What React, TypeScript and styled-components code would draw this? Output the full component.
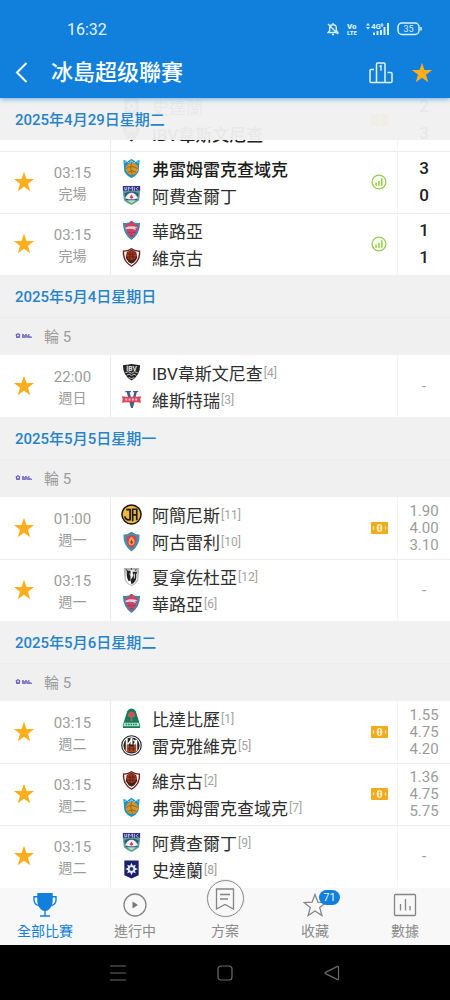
import React from "react";
import styled, { createGlobalStyle } from "styled-components";

const BLUE = "#117fdc";
const AMBER = "#fdae1c";

const GlobalStyle = createGlobalStyle`
  * { box-sizing: border-box; }
  body {
    margin: 0;
    background: #fff;
    font-family: Roboto, "Noto Sans CJK TC", sans-serif;
    color: #2b2b2b;
  }
  button {
    margin: 0;
    padding: 0;
    border: 0;
    background: none;
    font: inherit;
    color: inherit;
    cursor: pointer;
  }
  h1, h2, p, ul { margin: 0; padding: 0; }
  ul { list-style: none; }
  svg { display: block; flex: none; }
`;

const Screen = styled.div`
  display: flex;
  flex-direction: column;
  height: 100vh;
`;

const Header = styled.header`
  position: relative;
  z-index: 3;
  background: ${BLUE};
  color: #fff;
  box-shadow: 0 1px 5px rgba(17, 127, 220, 0.6);
`;

const StatusBar = styled.div`
  display: flex;
  align-items: center;
  justify-content: space-between;
  height: 48px;
  padding: 10px 28px 0 67px;
  font-size: 16px;
  color: #e2f3ff;
`;

const StatusIcons = styled.div`
  display: flex;
  align-items: center;
  gap: 8px;
`;

const AppBar = styled.div`
  display: flex;
  align-items: center;
  height: 50px;
  padding: 0 17px 0 14px;
`;

const Title = styled.h1`
  flex: 1;
  padding-left: 21px;
  font-size: 22px;
  line-height: 30px;
  font-weight: 500;
`;

const IconButton = styled.button<{ $gap?: number }>`
  display: grid;
  place-items: center;
  margin-left: ${(p) => p.$gap ?? 0}px;
`;

const Feed = styled.main`
  flex: 1;
  min-height: 0;
  overflow-y: auto;
  scrollbar-width: none;
`;

const DateHeading = styled.h2`
  position: sticky;
  top: 0;
  z-index: 2;
  display: flex;
  align-items: center;
  height: 42px;
  padding: 0 15px 2px;
  background: rgba(240, 240, 240, 0.96);
  color: #2583cb;
  font-size: 15px;
  font-weight: 500;
`;

const LeagueRow = styled.div`
  display: flex;
  align-items: center;
  gap: 12px;
  height: 38px;
  padding: 0 15px 2px;
  background: #f0f0f0;
  border-top: 1px solid #ededed;
  color: #9c9c9c;
  font-size: 15px;
`;

const MatchList = styled.ul<{ $scrolled?: boolean }>`
  margin-top: ${(p) => (p.$scrolled ? -51 : 0)}px;
`;

const Match = styled.li`
  display: grid;
  grid-template-columns: 35px 75px 1fr 36px 53px;
  height: 62px;
  background: #fff;

  & + & {
    box-shadow: inset 0 1px #ececec;
  }
`;

const FavouriteButton = styled.button`
  display: flex;
  align-items: center;
  justify-content: flex-end;
`;

const Kickoff = styled.div`
  display: flex;
  flex-direction: column;
  align-items: center;
  justify-content: center;
  padding-top: 4px;
  color: #9c9c9c;
  font-size: 15px;
  line-height: 21px;
`;

const Day = styled.span`
  font-size: 14px;
`;

const Teams = styled.div`
  display: flex;
  flex-direction: column;
  justify-content: center;
  min-width: 0;
  padding-left: 10px;
  border-left: 1px solid #ececec;
`;

const Team = styled.div<{ $winner?: boolean }>`
  display: flex;
  align-items: center;
  height: 27px;
  font-size: 17px;
  font-weight: ${(p) => (p.$winner ? 500 : 400)};
  color: ${(p) => (p.$winner ? "#1c1c1c" : "#2e2e2e")};
  white-space: nowrap;
`;

const TeamName = styled.span`
  padding-left: 10px;
`;

const Rank = styled.span`
  padding-left: 1px;
  font-size: 12px;
  font-weight: 400;
  color: #a2a2a2;
`;

const Marker = styled.div`
  display: flex;
  align-items: center;
  justify-content: center;
`;

const Result = styled.div<{ $kind: "score" | "odds" }>`
  display: flex;
  flex-direction: column;
  align-items: center;
  justify-content: center;
  border-left: 1px solid #f3f3f3;
  font-size: ${(p) => (p.$kind === "score" ? 17 : 15)}px;
  line-height: ${(p) => (p.$kind === "score" ? 27 : 17)}px;
  font-weight: ${(p) => (p.$kind === "score" ? 500 : 400)};
  color: ${(p) => (p.$kind === "score" ? "#222" : "#9c9c9c")};
`;

const TabBar = styled.nav`
  position: relative;
  z-index: 3;
  display: grid;
  grid-template-columns: repeat(5, 1fr);
  grid-template-rows: 57px;
  background: #f8f8f8;
`;

const Tab = styled.button<{ $active?: boolean }>`
  display: flex;
  flex-direction: column;
  align-items: center;
  justify-content: flex-end;
  gap: 3px;
  padding-bottom: 2px;
  font-size: 14px;
  line-height: 23px;
  color: ${(p) => (p.$active ? BLUE : "#8b8b8b")};
`;

const TabIcon = styled.span`
  position: relative;
  display: block;
`;

const RaisedIcon = styled.span`
  display: grid;
  flex: none;
  place-items: center;
  width: 37px;
  height: 37px;
  border: 1px solid #8b8b8b;
  border-radius: 50%;
  background: #f8f8f8;
  box-shadow: 0 0 0 1px #f0f0f0;
`;

const Badge = styled.span`
  position: absolute;
  left: 16px;
  top: -3px;
  width: 21px;
  height: 15px;
  border-radius: 8px;
  background: ${BLUE};
  color: #e8f5ff;
  font-size: 11px;
  line-height: 15px;
  text-align: center;
`;

const SystemBar = styled.footer`
  display: flex;
  align-items: center;
  justify-content: center;
  gap: 91px;
  height: 55px;
  background: #000;
`;

const Star = ({ size = 22 }: { size?: number }) => (
  <svg width={size} height={size} viewBox="0 0 22 22">
    <path
      d="M11 .8l2.500 7.200 7.600.1-6.100 4.700 2.200 7.400L11 15.800l-6.200 4.400L7 12.800.9 8.100l7.600-.1z"
      fill={AMBER}
    />
  </svg>
);

const BackIcon = () => (
  <svg width="16" height="24" viewBox="0 0 16 24" fill="none" stroke="#fff" strokeWidth="2">
    <path d="M12.500 2L3 11.500 12.500 21" />
  </svg>
);

const PodiumIcon = () => (
  <svg width="24" height="22" viewBox="0 0 24 22" fill="none" stroke="#e3f4ff" strokeWidth="1.500">
    <path d="M7.500 20.500V2q0-1 1-1h6.500q1 0 1 1v18.500" />
    <path d="M5 7.500H2q-1 0-1 1v11q0 1 1 1h20q1 0 1-1v-8q0-1-1-1h-3.500" />
    <path d="M10.500 4.500l1.500-.8v5" strokeWidth="1.400" />
  </svg>
);

const MutedBellIcon = () => (
  <svg width="12" height="14" viewBox="0 0 12 14" fill="none" stroke="#d8f0ff" strokeWidth="1.400">
    <path d="M6 1v1.500M1.200 10.500h9.600L9.300 8.500V6Q9.300 2.700 6 2.700T2.700 6v2.500zM5 12.500h2M1 2l10 10" />
  </svg>
);

const VolteIcon = () => (
  <svg width="10" height="14" viewBox="0 0 10 14" fill="#d8f0ff" fontFamily="Roboto, sans-serif" fontWeight="900">
    <text x="0" y="6.500" fontSize="8">Vo</text>
    <text x="0" y="13" fontSize="6">LTE</text>
  </svg>
);

const SignalIcon = () => (
  <svg width="24" height="14" viewBox="0 0 24 14" fill="#d8f0ff">
    <path d="M1 3.500L3 1l2 2.500zM1 5l2 2.500L5 5z" />
    <text x="6" y="7" fontSize="8" fontFamily="Roboto, sans-serif" fontWeight="700">4G</text>
    <path d="M16.500 1h1v1.500h1v1h-1V5h-1V3.500h-1v-1h1zM8 10.500h2V13H8zM11.500 9h2v4h-2zM15 8h2v5h-2zM18.500 5h2v8h-2zM22 1h2v12h-2z" />
  </svg>
);

const BatteryIcon = () => (
  <svg width="25" height="14" viewBox="0 0 25 14" fill="none" stroke="#d8f0ff" strokeWidth="1.500">
    <rect x="1" y="1" width="21" height="11.500" rx="4" />
    <path d="M24 5v3.500" />
    <text x="11.500" y="10.200" fontSize="9" textAnchor="middle" fontFamily="Roboto, sans-serif" fill="#d8f0ff" stroke="none">
      35
    </text>
  </svg>
);

const LeagueLogo = () => (
  <svg width="17" height="8" viewBox="0 0 17 8" fill="#6b62c4">
    <path d="M3 1l2.300 1.600L4.700 6H1.300L.6 2.600z" />
    <circle cx="3" cy="3.600" r="1" fill="#dedcf0" />
    <path d="M7 2h2v1h1V2h2v1.200h1V2h1.500v2h1V4.500H17V6H12V5.500h-1V6H7z" opacity=".8" />
  </svg>
);

const StatsMarker = () => (
  <svg width="16" height="16" viewBox="0 0 16 16">
    <circle cx="8" cy="8" r="6.900" fill="#fbfff2" stroke="#95c955" strokeWidth="1.300" />
    <path d="M4.300 8.500H6v3.200H4.300zM7.100 7h1.700v4.700H7.100zM9.900 4.300h1.700v7.400H9.900z" fill="#9bcf56" />
  </svg>
);

const CashMarker = () => (
  <svg width="17" height="12" viewBox="0 0 17 12">
    <rect width="17" height="12" rx="1" fill="#f2ab1f" />
    <ellipse cx="8.500" cy="6" rx="2.800" ry="4" fill="#fff0c2" />
    <path d="M8.500 2.800v6.400M7.300 4.600h2.200M7.300 7.300h2.200" stroke="#f2ab1f" strokeWidth=".8" />
    <path d="M2.500 4.500v3M14.500 4.500v3" stroke="#fff0c2" strokeWidth="1.200" />
  </svg>
);

type CrestName =
  | "fram" | "hafnar" | "valur" | "vikingur" | "ibv" | "vestri"
  | "akranes" | "afture" | "kaplakriki" | "breida" | "kr" | "stjarnan";

const crestArt: Record<CrestName, React.ReactNode> = {
  fram: (
    <>
      <path d="M2.500 2l4.500 1.500L11 1l4 2.500L19.500 2l-1 12q-2 5-7.500 7-5.500-2-7.500-7z" fill="#1d91c7" />
      <path d="M4 5l2-2 2 2M9 5l2-2 2 2M14 5l2-2 2 2" stroke="#d9f0f5" fill="none" />
      <circle cx="11.500" cy="11.500" r="6.500" fill="#d4952c" />
      <path d="M5.500 11q5-4 12 0M7 15q5-3 9 0M11 5.500q-2 5 1 12" stroke="#8c5a15" strokeWidth=".8" fill="none" />
    </>
  ),
  hafnar: (
    <>
      <path d="M2 1h18v6l-1 9q-4 3-8 5-5-2-8-5L2 7z" fill="#5ca488" />
      <path d="M2 1h18v5H2z" fill="#342f86" />
      <path d="M4 2v3h2V2m2 4V2l2 2 2-2v4m2-4v4m4-4l-2 2 2 2" stroke="#cfd7ef" strokeWidth=".9" fill="none" />
      <path d="M3.500 9l4-2h7l4 2-1 6-3 2h-7l-3-2z" fill="#30598a" />
      <path d="M4 14q3-6 7-6t7 6l-4 1H8z" fill="#f1eff0" />
      <path d="M9 13l2-3 2 3-2 1.500z" fill="#d83a4e" />
      <path d="M6 16h10l-5 3z" fill="#b8e0c9" />
    </>
  ),
  valur: (
    <>
      <path d="M11 1q3 3 9 2 0 12-9 18Q2 15 2 3q6 1 9-2z" fill="#3c8ab4" />
      <path d="M11 3q3 2 7 2-1 9-7 14Q5 14 4 5q4 0 7-2z" fill="#d8405b" />
      <path d="M4.500 8q6.500-3 13 0l-3 .8 1.500 2q-6-2.500-11-1z" fill="#cddbe8" />
      <path d="M7 13h3l1 1.500L12 13h3M9.500 16.500h3" stroke="#6c4a7c" fill="none" />
      <circle cx="11" cy="2.500" r="1.500" fill="#e5304b" />
    </>
  ),
  vikingur: (
    <>
      <path d="M2 3.500q5 .5 9-2.500 4 3 9 2.500Q21.500 15 11 21 .5 15 2 3.500z" fill="#712019" />
      <path d="M3.300 5q4.500 0 7.700-2.500Q14.200 5 18.700 5 19 14.500 11 19.500 3 14.500 3.300 5z" fill="#fff" />
      <path d="M6 5.500L11 3l5 2.500 1 6-3 4.500-3 1.500L8 16l-3-4.500z" fill="#3a211a" />
      <circle cx="11" cy="8.800" r="5" fill="#b5391d" />
      <path d="M6.500 7.500h9M6.500 10.500h9M9.500 4v9.500M12.500 4v9.500" stroke="#4c1c12" strokeWidth=".8" fill="none" />
    </>
  ),
  ibv: (
    <>
      <path d="M2 3.500L11 2l9 1.500q0 11-9 16-9-5-9-16z" fill="#222" />
      <text x="11" y="9" fontSize="7" fontWeight="700" fill="#e9e9e9" textAnchor="middle">ÍBV</text>
      <path d="M4.500 11.200l3.200-1 3.300 1.500 3.300-1.500 3.200 1M6 13.800l2.500-1 2.500 1.500 2.500-1.500 2.500 1M8 16.300l3 1 3-1" stroke="#ddd" strokeWidth=".9" fill="none" />
    </>
  ),
  vestri: (
    <>
      <path d="M4.500 2h6v1.500H9l2.500 9 2.500-9h-1.500V2H18v1.500h-1.500L12.500 20h-2L6 3.500H4.500z" fill="#3d5f8b" />
      <path d="M1 7.500l4 .5h12l4-.5-.8 3.500.8 3.500-3.500-.5H5l-4 .5.800-3.500z" fill="#e04457" />
      <path d="M4.500 11h2M8 11h2M11.500 11h2M15 11h2" stroke="#f3c7cf" strokeWidth="2" />
    </>
  ),
  akranes: (
    <>
      <circle cx="11" cy="11" r="10" fill="#f1b83b" stroke="#171717" strokeWidth="1.600" />
      <path d="M4 13q.500 4 5.500 3.500V6H5.500M12.200 18V5.500h4.300V17M12 11.500h4.500" fill="none" stroke="#1b1b1b" strokeWidth="1.800" />
    </>
  ),
  afture: (
    <>
      <path d="M11 .8q4 3 8.500 3Q20 15 11 21.500 2 15 2.500 3.800 7 3.800 11 .8z" fill="#4790ad" />
      <path d="M11 4q3 1.500 5.500 2Q16.500 14 11 18.500 5.500 14 5.500 6 8 5.500 11 4z" fill="#cf4458" />
      <path d="M11 6q4 3 3 7-1 2-3 2-3 0-3-3 0-4 3-6z" fill="#f0a44a" />
      <path d="M9.500 12l1.500-3 1.500 3-1 2z" fill="#a92c3c" />
    </>
  ),
  kaplakriki: (
    <>
      <path d="M3 2h16v3l-1 10q-2 4-7 6-5-2-7-6L3 5z" fill="#b4b4b4" />
      <path d="M5 6q6-3 12 0v8q-2 4-6 6-5-2-6-6z" fill="#fff" />
      <path d="M5 3l2 2m4-3v2m5-1l-1 2" stroke="#444" />
      <path d="M6 5h4v10l3-5-1-4h5l-1 3v4q-1 4-5 6l-1-4-2 1q-2-4-2-6z" fill="#202020" />
      <path d="M9 8l2 3M14 8v5" stroke="#eee" />
    </>
  ),
  breida: (
    <>
      <path d="M11 .5q3 0 4.500 3L20 18v3H2v-3L6.500 3.500q1.500-3 4.500-3z" fill="#127c58" />
      <path d="M7 9q0-5 4-5t4 5l-3 1v4h-2v-4z" fill="#9d6c5c" />
      <circle cx="11" cy="6" r="2.400" fill="#e14855" />
      <path d="M3.500 15.500h15l1 3.500h-17z" fill="#b7e4cc" />
      <path d="M5 17.300h12" stroke="#127c58" strokeWidth="1.500" strokeDasharray="1.500 1" />
    </>
  ),
  kr: (
    <>
      <circle cx="11" cy="11" r="10.200" fill="#fff" stroke="#262626" strokeWidth="1.200" />
      <circle cx="11" cy="11" r="8.500" fill="#222" />
      <path d="M6 4v13M11 3v7M16 5v12" stroke="#fff" strokeWidth="2" />
      <path d="M7 10l4-5M12.500 5l3 2-2 3" stroke="#fff" strokeWidth="1.500" fill="none" />
      <path d="M6 10h2l1 2h4l1-2h2v8H6z" fill="#a94b26" />
      <path d="M7 14.500h8M9 12v5M13 12v5" stroke="#5d2a16" />
    </>
  ),
  stjarnan: (
    <>
      <path d="M3.500 1.500h15V17L11 20.500 3.500 17z" fill="#1b2168" />
      <path d="M11 4l1.500 3L15.500 6l-1 3L17.500 10.500l-3 1.500 1 3-3-1L11 17l-1.500-3-3 1 1-3-3-1.500 3-1.500-1-3 3 1z" fill="#e8ecf8" />
      <circle cx="11" cy="10.500" r="2" fill="#29327b" />
    </>
  ),
};

const Crest = ({ name }: { name: CrestName }) => (
  <svg width="21" height="21" viewBox="0 0 22 22" fontFamily="Roboto, sans-serif" aria-hidden="true">
    {crestArt[name]}
  </svg>
);

interface Side {
  name: string;
  crest: CrestName;
  rank?: number;
  winner?: boolean;
}

interface Fixture {
  time?: string;
  day?: string;
  home: Side;
  away: Side;
  score?: [number, number];
  odds?: string[];
  marker?: "stats" | "cash";
}

interface Matchday {
  date: string;
  round?: string;
  scrolled?: boolean;
  fixtures: Fixture[];
}

const matchdays: Matchday[] = [
  {
    date: "2025年4月29日星期二",
    scrolled: true,
    fixtures: [
      {
        marker: "cash", score: [2, 3],
        home: { name: "史達蘭", crest: "stjarnan" },
        away: { name: "IBV韋斯文尼查", crest: "ibv", winner: true },
      },
      {
        time: "03:15", day: "完場", marker: "stats", score: [3, 0],
        home: { name: "弗雷姆雷克查域克", crest: "fram", winner: true },
        away: { name: "阿費查爾丁", crest: "hafnar" },
      },
      {
        time: "03:15", day: "完場", marker: "stats", score: [1, 1],
        home: { name: "華路亞", crest: "valur" },
        away: { name: "維京古", crest: "vikingur" },
      },
    ],
  },
  {
    date: "2025年5月4日星期日",
    round: "輪 5",
    fixtures: [
      {
        time: "22:00", day: "週日",
        home: { name: "IBV韋斯文尼查", crest: "ibv", rank: 4 },
        away: { name: "維斯特瑞", crest: "vestri", rank: 3 },
      },
    ],
  },
  {
    date: "2025年5月5日星期一",
    round: "輪 5",
    fixtures: [
      {
        time: "01:00", day: "週一", marker: "cash", odds: ["1.90", "4.00", "3.10"],
        home: { name: "阿簡尼斯", crest: "akranes", rank: 11 },
        away: { name: "阿古雷利", crest: "afture", rank: 10 },
      },
      {
        time: "03:15", day: "週一",
        home: { name: "夏拿佐杜亞", crest: "kaplakriki", rank: 12 },
        away: { name: "華路亞", crest: "valur", rank: 6 },
      },
    ],
  },
  {
    date: "2025年5月6日星期二",
    round: "輪 5",
    fixtures: [
      {
        time: "03:15", day: "週二", marker: "cash", odds: ["1.55", "4.75", "4.20"],
        home: { name: "比達比歷", crest: "breida", rank: 1 },
        away: { name: "雷克雅維克", crest: "kr", rank: 5 },
      },
      {
        time: "03:15", day: "週二", marker: "cash", odds: ["1.36", "4.75", "5.75"],
        home: { name: "維京古", crest: "vikingur", rank: 2 },
        away: { name: "弗雷姆雷克查域克", crest: "fram", rank: 7 },
      },
      {
        time: "03:15", day: "週二",
        home: { name: "阿費查爾丁", crest: "hafnar", rank: 9 },
        away: { name: "史達蘭", crest: "stjarnan", rank: 8 },
      },
    ],
  },
];

const TeamLine = ({ side }: { side: Side }) => (
  <Team $winner={side.winner}>
    <Crest name={side.crest} />
    <TeamName>{side.name}</TeamName>
    {side.rank !== undefined && <Rank>[{side.rank}]</Rank>}
  </Team>
);

const MatchRow = ({ fixture }: { fixture: Fixture }) => {
  const { time, day, home, away, score, odds, marker } = fixture;
  return (
    <Match>
      <FavouriteButton type="button" aria-label="收藏">
        <Star />
      </FavouriteButton>
      <Kickoff>
        {time && <time>{time}</time>}
        {day && <Day>{day}</Day>}
      </Kickoff>
      <Teams>
        <TeamLine side={home} />
        <TeamLine side={away} />
      </Teams>
      <Marker>
        {marker === "stats" && <StatsMarker />}
        {marker === "cash" && <CashMarker />}
      </Marker>
      <Result $kind={score ? "score" : "odds"}>
        {(score ?? odds ?? ["-"]).map((value, i) => (
          <span key={i}>{value}</span>
        ))}
      </Result>
    </Match>
  );
};

const TrophyIcon = () => (
  <svg width="24" height="24" viewBox="0 0 24 24" fill="none" stroke={BLUE} strokeWidth="1.400">
    <path d="M5 .8h14v8q-1 6-5 8.200h-4Q6 14.800 5 8.800z" fill={BLUE} />
    <path d="M5 3.800H1v3q0 5 5.500 6M19 3.800h4v3q0 5-5.500 6M12 16v7M7 23h10" />
  </svg>
);

const PlayIcon = () => (
  <svg width="24" height="24" viewBox="0 0 24 24" fill="none" stroke="#858585" strokeWidth="1.300">
    <circle cx="12" cy="12" r="11" />
    <path d="M9.500 8.500v7l5.500-3.500z" fill="#777" stroke="none" />
  </svg>
);

const PlanIcon = () => (
  <svg width="20" height="22" viewBox="0 0 20 22" fill="none" stroke="#858585" strokeWidth="1.300">
    <path d="M1.500 1h17v20L10 16.500 1.500 21zM5 6.500h10M5 11h8" />
  </svg>
);

const StarOutlineIcon = () => (
  <svg width="24" height="24" viewBox="0 0 24 24" fill="none" stroke="#858585" strokeWidth="1.300">
    <path d="M12 1.500l2.900 7.700 8.200.3-6.400 5.100 2.200 7.900L12 18l-6.900 4.500 2.200-7.900L.9 9.500l8.200-.3z" />
  </svg>
);

const DataIcon = () => (
  <svg width="24" height="24" viewBox="0 0 24 24" fill="none" stroke="#858585" strokeWidth="1.300">
    <rect x="1.500" y="1.500" width="21" height="21" rx="1" />
    <path d="M7.500 11v6.500M12.500 6v11.500M17 13v4.500" />
  </svg>
);

export default function App() {
  return (
    <Screen>
      <GlobalStyle />
      <Header>
        <StatusBar>
          <span>16:32</span>
          <StatusIcons>
            <MutedBellIcon />
            <VolteIcon />
            <SignalIcon />
            <BatteryIcon />
          </StatusIcons>
        </StatusBar>
        <AppBar>
          <IconButton type="button" aria-label="返回">
            <BackIcon />
          </IconButton>
          <Title>冰島超级聯賽</Title>
          <IconButton type="button" aria-label="排名">
            <PodiumIcon />
          </IconButton>
          <IconButton type="button" aria-label="收藏" $gap={18}>
            <Star />
          </IconButton>
        </AppBar>
      </Header>

      <Feed>
        {matchdays.map((matchday) => (
          <section key={matchday.date}>
            <DateHeading>{matchday.date}</DateHeading>
            {matchday.round && (
              <LeagueRow>
                <LeagueLogo />
                <span>{matchday.round}</span>
              </LeagueRow>
            )}
            <MatchList $scrolled={matchday.scrolled}>
              {matchday.fixtures.map((fixture) => (
                <MatchRow key={fixture.home.name} fixture={fixture} />
              ))}
            </MatchList>
          </section>
        ))}
      </Feed>

      <TabBar>
        <Tab type="button" $active>
          <TabIcon><TrophyIcon /></TabIcon>
          全部比賽
        </Tab>
        <Tab type="button">
          <TabIcon><PlayIcon /></TabIcon>
          進行中
        </Tab>
        <Tab type="button">
          <RaisedIcon><PlanIcon /></RaisedIcon>
          方案
        </Tab>
        <Tab type="button">
          <TabIcon>
            <StarOutlineIcon />
            <Badge>71</Badge>
          </TabIcon>
          收藏
        </Tab>
        <Tab type="button">
          <TabIcon><DataIcon /></TabIcon>
          數據
        </Tab>
      </TabBar>

      <SystemBar>
        <IconButton type="button" aria-label="選單">
          <svg width="16" height="16" viewBox="0 0 16 16" stroke="#6a6a6a" strokeWidth="1.200">
            <path d="M0 1h16M0 8h16M0 15h16" />
          </svg>
        </IconButton>
        <IconButton type="button" aria-label="主畫面">
          <svg width="16" height="16" viewBox="0 0 16 16" fill="none" stroke="#6a6a6a" strokeWidth="1.200">
            <rect x="1" y="1" width="14" height="14" rx="3" />
          </svg>
        </IconButton>
        <IconButton type="button" aria-label="上一頁">
          <svg width="16" height="16" viewBox="0 0 16 16" fill="none" stroke="#6a6a6a" strokeWidth="1.200">
            <path d="M14.500 2v12q0 1-1 .6L1.500 8.600q-1-.6 0-1.200l12-6q1-.4 1 .6z" />
          </svg>
        </IconButton>
      </SystemBar>
    </Screen>
  );
}
